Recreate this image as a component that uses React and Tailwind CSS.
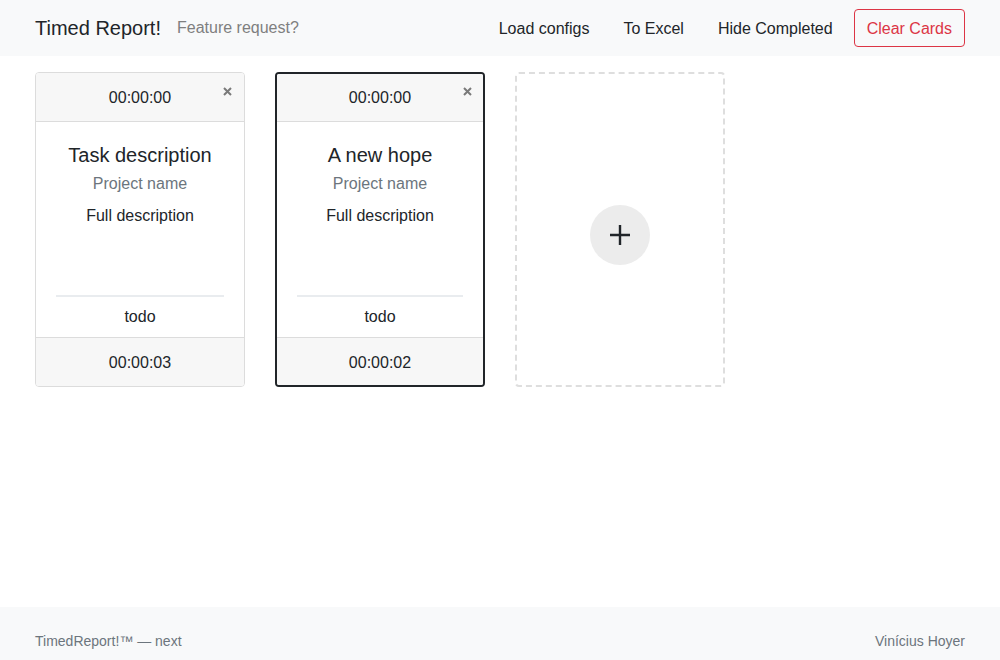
import React from "react";

function Card({ title, timeTop, timeBottom, active }) {
  const band = active ? "h-[48px]" : "h-[49px]";
  return (
    <div
      className={
        "w-[210px] h-[315px] rounded-[4px] flex flex-col overflow-hidden bg-white " +
        (active ? "border-2 border-[#212529]" : "border border-[#dcdcdc]")
      }
    >
      <div className={"relative shrink-0 bg-[#f7f7f7] border-b border-[#dcdcdc] flex items-center justify-center pt-[1px] text-[16px] text-[#212529] " + band}>
        {timeTop}
        <svg className={"absolute " + (active ? "right-[11px] top-[13px]" : "right-[12px] top-[14px]")} width="9" height="9" viewBox="0 0 9 9">
          <path d="M1 1L8 8M8 1L1 8" stroke="#7a7a7a" strokeWidth="2" />
        </svg>
      </div>
      <div className="flex-1 flex flex-col items-center px-5 pt-[21px] pb-[8px] text-center">
        <div className="text-[20px] leading-[24px] text-[#212529]">{title}</div>
        <div className="mt-[5px] text-[16px] leading-[24px] text-[#6c757d]">Project name</div>
        <div className="mt-[8px] text-[16px] leading-[24px] text-[#212529]">Full description</div>
        <div className="mt-auto w-full h-[2px] bg-[#e9ecef]" />
        <div className="mt-[8px] text-[16px] leading-[24px] text-[#212529]">todo</div>
      </div>
      <div className={"shrink-0 bg-[#f7f7f7] border-t border-[#dcdcdc] flex items-center justify-center text-[16px] text-[#212529] " + band + (active ? " pt-[3px]" : " pt-[1px]")}>
        {timeBottom}
      </div>
    </div>
  );
}

export default function App() {
  return (
    <div className="bg-white" style={{ fontFamily: '"Liberation Sans", Arial, sans-serif' }}>
      <nav className="h-[56px] bg-[#f8f9fa] flex items-center px-[35px]">
        <span className="text-[20px] text-[#212529]">Timed Report!</span>
        <span className="ml-4 text-[16px] text-[#7f7f7f]">Feature request?</span>
        <div className="ml-auto flex items-center text-[16px] text-[#212529]">
          <span className="px-[17px] pt-[2px]">Load configs</span>
          <span className="px-[17px] pt-[2px]">To Excel</span>
          <span className="pl-[17px] pr-[21px] pt-[2px]">Hide Completed</span>
          <span className="h-[38px] px-[12px] pt-[1px] flex items-center border border-[#dc3545] rounded-[4px] text-[#dc3545]">
            Clear Cards
          </span>
        </div>
      </nav>
      <main className="h-[551px] px-[35px] pt-4 flex items-start gap-[30px]">
        <Card title="Task description" timeTop="00:00:00" timeBottom="00:00:03" />
        <Card title="A new hope" timeTop="00:00:00" timeBottom="00:00:02" active />
        <div className="w-[210px] h-[315px] rounded-[4px] border-2 border-dashed border-[#dedede] flex items-center justify-center">
          <div className="mt-[10px] w-[60px] h-[60px] rounded-full bg-[#ececec] flex items-center justify-center">
            <svg width="20" height="20" viewBox="0 0 20 20">
              <path d="M10 0v20M0 10h20" stroke="#212529" strokeWidth="2.4" />
            </svg>
          </div>
        </div>
      </main>
      <footer className="bg-[#f8f9fa] px-[35px] pt-[24px] pb-[24px] flex justify-between text-[14px] leading-[21px] text-[#6c757d]">
        <span>TimedReport!™ — next</span>
        <span>Vinícius Hoyer</span>
      </footer>
    </div>
  );
}
